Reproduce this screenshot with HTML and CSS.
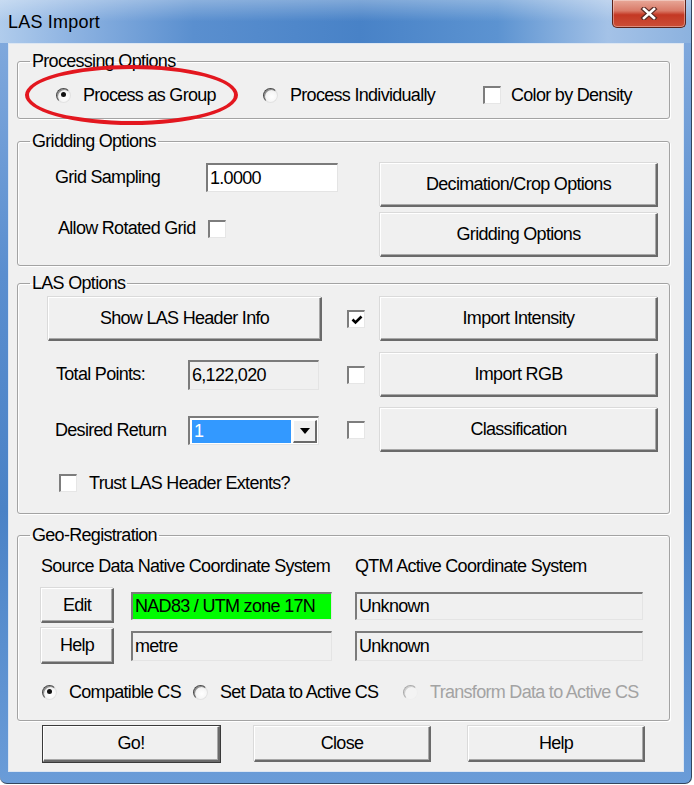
FILE: index.html
```html
<!DOCTYPE html>
<html lang="en">
<head>
    <meta charset="UTF-8">
    <title>LAS Import</title>
    <link rel="stylesheet" href="styles.css">
</head>
<body>
<div class="window">
    <div class="titlebar">
        <div class="title">LAS Import</div>
        <div class="close-btn">
            <svg width="18" height="13" viewBox="0 0 18 13">
                <path d="M4 2 L14 11 M14 2 L4 11" stroke="#5b2b24" stroke-width="5" stroke-linecap="square"/>
                <path d="M4 2 L14 11 M14 2 L4 11" stroke="#fff" stroke-width="2.6" stroke-linecap="square"/>
            </svg>
        </div>
    </div>

    <div class="client">
        <!-- Processing -->
        <fieldset class="group">
            <legend>Processing Options</legend>
            <div class="proc-body">
                <div class="opt"><span class="radio checked"></span>Process as Group</div>
                <div class="opt"><span class="radio"></span>Process Individually</div>
                <div class="opt opt-check"><span class="check"></span>Color by Density</div>
            </div>
        </fieldset>

        <!-- Gridding -->
        <fieldset class="group grid-group">
            <legend>Gridding Options</legend>
            <div class="grid-body">
                <div class="field-row">
                    <span class="lbl lbl-sampling">Grid Sampling</span>
                    <span class="field white sampling">1.0000</span>
                </div>
                <div class="btn">Decimation/Crop Options</div>
                <div class="check-row">
                    <span class="lbl lbl-rotated">Allow Rotated Grid</span>
                    <span class="check"></span>
                </div>
                <div class="btn">Gridding Options</div>
            </div>
        </fieldset>

        <!-- LAS -->
        <fieldset class="group las-group">
            <legend>LAS Options</legend>
            <div class="las-body">
                <div class="btn header-btn">Show LAS Header Info</div>
                <span class="check checked">
                    <svg width="14" height="14" viewBox="0 0 14 14"><path d="M2.5 6.5 L5.5 9.5 L11.5 3.5" fill="none" stroke="#000" stroke-width="2.6"/></svg>
                </span>
                <div class="btn">Import Intensity</div>

                <div class="field-row">
                    <span class="lbl lbl-las">Total Points:</span>
                    <span class="field las-field">6,122,020</span>
                </div>
                <span class="check"></span>
                <div class="btn">Import RGB</div>

                <div class="field-row">
                    <span class="lbl lbl-las lbl-return">Desired Return</span>
                    <span class="combo">
                        <span class="combo-value">1</span>
                        <span class="combo-btn">
                            <svg width="10" height="6" viewBox="0 0 10 6"><path d="M0 0 H10 L5 6 Z" fill="#000"/></svg>
                        </span>
                    </span>
                </div>
                <span class="check"></span>
                <div class="btn">Classification</div>

                <div class="trust-row"><span class="check"></span>Trust LAS Header Extents?</div>
            </div>
        </fieldset>

        <!-- Geo-Registration -->
        <fieldset class="group geo-group">
            <legend>Geo-Registration</legend>
            <div class="geo-body">
                <div class="geo-head geo-src">Source Data Native Coordinate System</div>
                <div class="geo-head">QTM Active Coordinate System</div>

                <div class="btn small-btn">Edit</div>
                <span class="field green geo-field">NAD83 / UTM zone 17N</span>
                <span class="field geo-field wide">Unknown</span>

                <div class="btn small-btn help-btn">Help</div>
                <span class="field geo-field tall">metre</span>
                <span class="field geo-field wide tall">Unknown</span>
            </div>
            <div class="geo-radios">
                <div class="opt"><span class="radio checked"></span>Compatible CS</div>
                <div class="opt"><span class="radio"></span>Set Data to Active CS</div>
                <div class="opt disabled"><span class="radio"></span>Transform Data to Active CS</div>
            </div>
        </fieldset>

        <div class="actions">
            <div class="btn action default">Go!</div>
            <div class="btn action close-action">Close</div>
            <div class="btn action help-action">Help</div>
        </div>

        <!-- red marker drawn over the screenshot -->
        <div class="highlight"></div>
    </div>
</div>
</body>
</html>
```

FILE: styles.css
```css
* {
    box-sizing: border-box;
}

body {
    margin: 0;
    background: #fff;
    font-family: "Liberation Sans", Arial, sans-serif;
    font-size: 18px;
    letter-spacing: -0.7px;
    color: #000;
}

/* Window frame */
.window {
    width: 692px;
    height: 784px;
    display: flex;
    flex-direction: column;
    padding: 0 7px 11px 8px;
    background: linear-gradient(180deg, #86addf 0%, #5a8ecf 35%, #4a82c6 65%, #6a9cd8 100%);
    border-right: 1px solid #34465e;
    border-bottom: 1px solid #34465e;
    border-radius: 0 0 7px 7px;
}

.titlebar {
    height: 43px;
    margin: 0 -7px 0 -8px;
    padding-left: 8px;
    display: flex;
    justify-content: space-between;
    align-items: flex-start;
    background:
        linear-gradient(180deg, rgba(255, 255, 255, 0.3), rgba(255, 255, 255, 0) 50%),
        linear-gradient(90deg, #b0ccec 0%, #8fb4e2 10%, #5a8fcf 28%, #4882c7 52%, #5c93d1 72%, #a4c2e7 88%, #8cb2df 100%);
}

.title {
    margin-top: 12px;
    line-height: 20px;
    font-size: 18px;
    letter-spacing: 0.2px;
}

.close-btn {
    width: 74px;
    height: 28px;
    margin-right: 5px;
    display: flex;
    align-items: center;
    justify-content: center;
    border: 1px solid #5a2219;
    border-top: none;
    border-radius: 0 0 5px 5px;
    background: linear-gradient(180deg, #e8a899 0%, #d97a68 40%, #c43824 55%, #cb4e36 100%);
    box-shadow: inset 0 0 0 1px rgba(255, 255, 255, 0.35);
}

.client {
    position: relative;
    flex: 1;
    background: #f0f0f0;
    border: 1px solid #dce6f2;
    padding: 7px 13px 0 8px;
}

/* Group boxes */
.group {
    margin: 0;
    padding: 0;
    min-width: 0;
    border: 1px solid #a3a3a3;
    border-radius: 3px;
    box-shadow: inset 1px 1px 0 #fff, 1px 1px 0 #fff;
}

.group legend {
    margin-left: 12px;
    padding: 0 2px;
    line-height: 20px;
}

.grid-group {
    margin-top: 12px;
}

.las-group {
    margin-top: 7px;
}

.geo-group {
    margin-top: 11px;
}

/* Controls */
.btn {
    display: flex;
    align-items: center;
    justify-content: center;
    white-space: nowrap;
    background: #f0f0f0;
    border-style: solid;
    border-width: 1px 2px 2px 1px;
    border-color: #fff #6a6a6a #6a6a6a #fff;
    box-shadow: inset -1px -1px 0 #a8a8a8, -1px -1px 0 #dadada;
}

.field {
    display: flex;
    align-items: center;
    padding-left: 2px;
    border-style: solid;
    border-width: 2px 1px 1px 2px;
    border-color: #7b7b7b #e4e4e4 #e4e4e4 #7b7b7b;
    background: #f0f0f0;
    white-space: nowrap;
}

.field.white {
    background: #fff;
}

.field.green {
    background: #00fc00;
}

.check {
    width: 18px;
    height: 18px;
    flex: none;
    display: flex;
    align-items: center;
    justify-content: center;
    background: #fff;
    border-style: solid;
    border-width: 2px 1px 1px 2px;
    border-color: #7d7d7d #e6e6e6 #e6e6e6 #7d7d7d;
}

.radio {
    width: 15px;
    height: 15px;
    flex: none;
    position: relative;
    border-radius: 50%;
    background: radial-gradient(circle at 60% 60%, #fff 0%, #f6f6f6 45%, #d6d6d6 100%);
    border: 1.5px solid;
    border-color: #4a4a4a #e2e2e2 #e2e2e2 #4a4a4a;
    box-shadow: inset 1px 1px 0 #8c8c8c;
}

.radio.checked::after {
    content: "";
    position: absolute;
    left: 3.5px;
    top: 3.5px;
    width: 5px;
    height: 5px;
    border-radius: 50%;
    background: #111;
}

.opt {
    display: flex;
    align-items: center;
    gap: 12px;
    height: 20px;
    white-space: nowrap;
}

.opt.disabled {
    color: #a3a3a3;
}

.opt.disabled .radio {
    border-color: #aaa #eee #eee #aaa;
    box-shadow: inset 1px 1px 0 #cfcfcf;
    background: #f3f3f3;
}

.lbl {
    white-space: nowrap;
}

/* Processing */
.proc-body {
    display: grid;
    grid-template-columns: 207px 220px auto;
    padding: 14px 0 13px 38px;
}

.opt-check {
    gap: 10px;
}

/* Gridding */
.grid-body {
    display: grid;
    grid-template-columns: 1fr 278px;
    grid-template-rows: 44px 44px;
    row-gap: 6px;
    padding: 12px 11px 8px 37px;
}

.field-row {
    display: flex;
    align-items: center;
}

.grid-body .field-row {
    align-self: start;
}

.lbl-sampling {
    width: 151px;
}

.sampling {
    width: 132px;
    height: 29px;
}

.check-row {
    display: flex;
    align-items: center;
    align-self: start;
    margin-top: 5px;
}

.lbl-rotated {
    width: 150px;
    margin-left: 3px;
}

/* LAS */
.las-body {
    display: grid;
    grid-template-columns: 299px 33px 278px;
    grid-template-rows: 44px 44px 44px auto;
    row-gap: 11.5px;
    align-items: center;
    padding: 4px 11px 21px 30px;
}

.header-btn {
    width: 274px;
    height: 44px;
}

.las-body .btn {
    height: 44px;
}

.lbl-las {
    width: 140px;
    padding-left: 8px;
}

.lbl-return {
    padding-left: 7px;
}

.las-field {
    width: 131px;
    height: 30px;
}

.combo {
    width: 131px;
    height: 29px;
    display: flex;
    padding: 2px 1px 1px 2px;
    background: #fff;
    border-style: solid;
    border-width: 2px 1px 1px 2px;
    border-color: #7b7b7b #e4e4e4 #e4e4e4 #7b7b7b;
}

.combo-value {
    flex: 1;
    display: flex;
    align-items: center;
    padding-left: 2px;
    background: #3399ff;
    color: #fff;
}

.combo-btn {
    width: 24px;
    margin-left: 2px;
    display: flex;
    align-items: center;
    justify-content: center;
    background: #f0f0f0;
    border-style: solid;
    border-width: 1px 2px 2px 1px;
    border-color: #fff #6a6a6a #6a6a6a #fff;
}

.trust-row {
    grid-column: 1 / -1;
    display: flex;
    align-items: center;
    gap: 12px;
    height: 18px;
    margin: 10.5px 0 0 11px;
}

/* Geo-Registration */
.geo-body {
    display: grid;
    grid-template-columns: 90px 224px 288px;
    grid-template-rows: 20px 47px 41px;
    align-items: center;
    padding: 11px 0 0 23px;
}

.geo-head {
    line-height: 20px;
    white-space: nowrap;
}

.geo-src {
    grid-column: 1 / 3;
}

.small-btn {
    width: 73px;
    height: 35px;
    margin-top: 12px;
    align-self: start;
}

.help-btn {
    height: 36px;
    margin-top: 5px;
}

.geo-field {
    width: 201px;
    height: 28px;
    margin-top: 12px;
}

.geo-field.wide {
    width: 288px;
}

.geo-field.tall {
    height: 30px;
    margin-top: 5px;
}

.geo-radios {
    display: grid;
    grid-template-columns: 151px 210px auto;
    padding: 18px 0 18px 24px;
}

.geo-radios .opt {
    gap: 12px;
}

/* Bottom buttons */
.actions {
    display: flex;
    padding: 5px 0 0 26px;
}

.action {
    width: 177px;
    height: 36px;
}

.action.default {
    box-shadow: 0 0 0 1px #3a3a3a, inset -1px -1px 0 #a8a8a8;
}

.close-action {
    margin-left: 34px;
}

.help-action {
    margin-left: 37px;
}

/* red ellipse over the first option */
.highlight {
    position: absolute;
    left: 16px;
    top: 21px;
    width: 213px;
    height: 60px;
    border: 4px solid #e3171f;
    border-radius: 50%;
}
```
